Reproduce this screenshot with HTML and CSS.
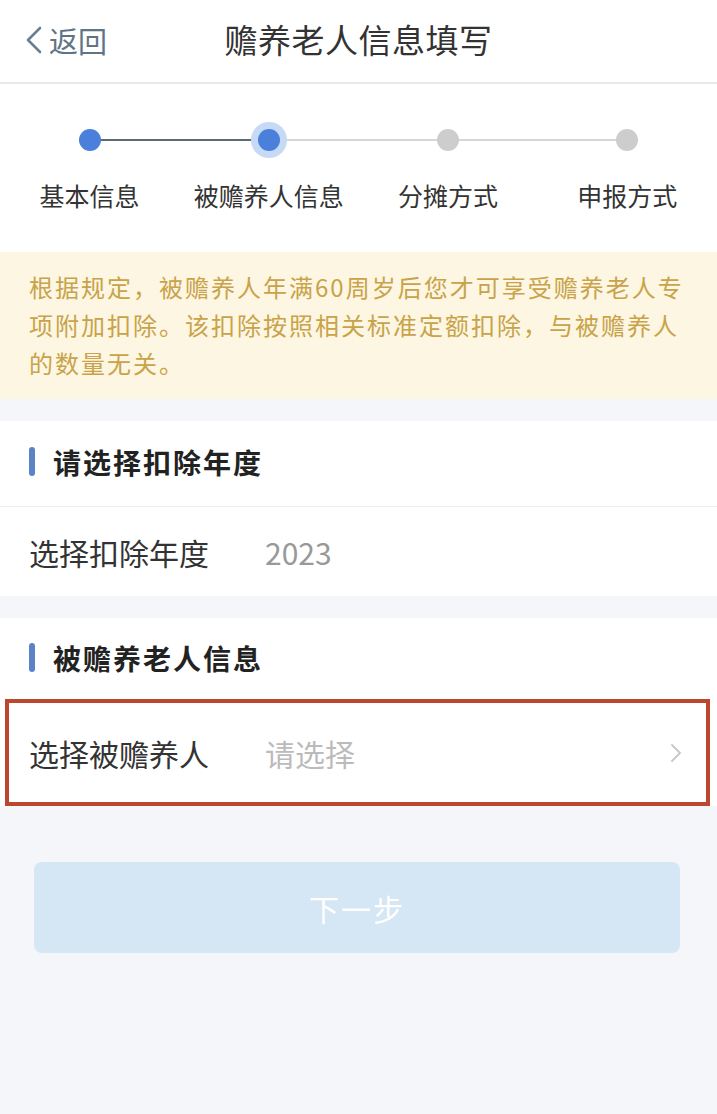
FILE: index.html
```html
<!DOCTYPE html>
<html lang="zh-CN">
<head>
    <meta charset="UTF-8">
    <meta name="viewport" content="width=device-width, initial-scale=1.0">
    <title>赡养老人信息填写</title>
    <link rel="stylesheet" href="styles.css">
</head>
<body>
    <header class="nav-bar">
        <a class="back" href="#">
            <svg class="back-icon" viewBox="0 0 18 28" width="18" height="28">
                <path d="M15 2 L3 14 L15 26" fill="none" stroke="currentColor" stroke-width="2.6" stroke-linecap="round" stroke-linejoin="round"/>
            </svg>
            <span>返回</span>
        </a>
        <h1 class="nav-title">赡养老人信息填写</h1>
    </header>

    <div class="steps">
        <div class="step done">
            <span class="dot"></span>
            <span class="step-label">基本信息</span>
        </div>
        <div class="step current">
            <span class="dot"></span>
            <span class="step-label">被赡养人信息</span>
        </div>
        <div class="step">
            <span class="dot"></span>
            <span class="step-label">分摊方式</span>
        </div>
        <div class="step">
            <span class="dot"></span>
            <span class="step-label">申报方式</span>
        </div>
    </div>

    <p class="notice">根据规定，被赡养人年满60周岁后您才可享受赡养老人专项附加扣除。该扣除按照相关标准定额扣除，与被赡养人的数量无关。</p>

    <section class="card">
        <h2 class="card-title">请选择扣除年度</h2>
        <div class="row">
            <span class="row-label">选择扣除年度</span>
            <span class="row-value">2023</span>
        </div>
    </section>

    <section class="card">
        <h2 class="card-title second">被赡养老人信息</h2>
        <div class="highlight">
            <div class="row picker">
                <span class="row-label">选择被赡养人</span>
                <span class="row-value placeholder">请选择</span>
                <svg class="arrow" viewBox="0 0 12 20" width="12" height="20">
                    <path d="M2 2 L10 10 L2 18" fill="none" stroke="currentColor" stroke-width="1.8" stroke-linecap="round" stroke-linejoin="round"/>
                </svg>
            </div>
        </div>
    </section>

    <div class="actions">
        <button class="next" disabled>下一步</button>
    </div>
</body>
</html>
```

FILE: styles.css
```css
* {
    box-sizing: border-box;
}
body {
    margin: 0;
    background: #f5f6fa;
    font-family: "Noto Sans CJK SC", "Noto Sans", sans-serif;
    color: #333;
    min-height: 1114px;
}
.nav-bar {
    height: 84px;
    background: #fff;
    border-bottom: 2px solid #e8e8ea;
    display: flex;
    align-items: center;
    justify-content: center;
    position: relative;
}
.back {
    position: absolute;
    left: 25px;
    top: 22px;
    display: flex;
    align-items: center;
    gap: 6px;
    color: #5f7486;
    text-decoration: none;
    font-size: 29px;
    line-height: 36px;
}
.back-icon {
    color: #6a7f90;
}
.nav-title {
    margin: 0 0 4px 0;
    font-size: 33px;
    font-weight: 400;
    letter-spacing: 0.5px;
    color: #333;
    line-height: 40px;
}
.steps {
    background: #fff;
    display: grid;
    grid-template-columns: repeat(4, 1fr);
    padding: 38px 0 39px;
}
.step {
    position: relative;
    display: flex;
    flex-direction: column;
    align-items: center;
    gap: 19px;
}
.step + .step::before {
    content: "";
    position: absolute;
    top: 17px;
    left: -50%;
    right: 50%;
    height: 2px;
    background: #d6d6d6;
}
.step.current::before {
    background: #5d6c72;
}
.dot {
    position: relative;
    z-index: 1;
    width: 36px;
    height: 36px;
    border-radius: 50%;
    display: flex;
    align-items: center;
    justify-content: center;
}
.dot::after {
    content: "";
    width: 22px;
    height: 22px;
    border-radius: 50%;
    background: #cdcdcd;
}
.done .dot::after,
.current .dot::after {
    background: #4a7fdc;
}
.current .dot {
    background: #c6daf6;
}
.step-label {
    font-size: 25px;
    line-height: 36px;
    color: #333;
}
.notice {
    margin: 0;
    background: #fdf6e2;
    color: #c8a349;
    font-size: 24px;
    letter-spacing: 2px;
    line-height: 38px;
    padding: 16px 24px 17px 29px;
}
.card {
    background: #fff;
    margin-top: 22px;
}
.card-title {
    margin: 0;
    display: flex;
    align-items: center;
    gap: 18px;
    height: 86px;
    padding: 0 29px 4px;
    font-size: 28px;
    letter-spacing: 2px;
    font-weight: 700;
    color: #222;
    border-bottom: 1px solid #ececec;
}
.card-title::before {
    content: "";
    width: 6px;
    height: 29px;
    border-radius: 3px;
    background: #5b84c6;
}
.card-title.second {
    height: 79px;
    padding-bottom: 0;
    border-bottom: none;
}
.row {
    display: flex;
    align-items: center;
    height: 89px;
    padding: 0 29px;
    font-size: 30px;
}
.row-label {
    width: 236px;
    color: #333;
}
.row-value {
    color: #999;
}
.placeholder {
    color: #bbb;
    flex: 1;
}
.highlight {
    margin: 2px 7px 0 5px;
    border: 4px solid #bd4631;
}
.picker {
    height: 99px;
    padding: 0 24px 0 20px;
}
.arrow {
    color: #c8c8c8;
}
.actions {
    padding: 56px 37px 0 34px;
}
.next {
    width: 100%;
    height: 91px;
    border: none;
    border-radius: 8px;
    background: #d5e6f5;
    color: #fff;
    font-family: inherit;
    font-size: 30px;
    letter-spacing: 2px;
}
```
